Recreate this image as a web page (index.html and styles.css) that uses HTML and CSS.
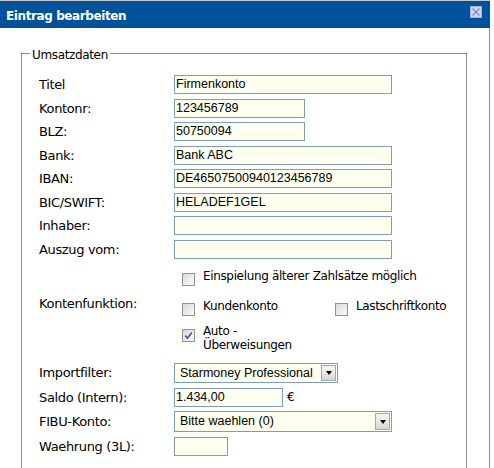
FILE: index.html
```html
<!DOCTYPE html>
<html lang="de">
<head>
<meta charset="utf-8">
<title>Eintrag bearbeiten</title>
<link rel="stylesheet" href="styles.css">
</head>
<body>
<div class="dlg">
  <div class="titlebar">
    <span class="title">Eintrag bearbeiten</span>
    <span class="close">
      <svg width="12" height="12" viewBox="0 0 12 12">
        <rect x="0.5" y="0.5" width="11" height="11" fill="#cdd5f1" stroke="#a6b3e4"/>
        <path d="M2.5 2.5 L9.5 9.5 M9.5 2.5 L2.5 9.5" stroke="#7d8dcf" stroke-width="1.4"/>
      </svg>
    </span>
  </div>
  <div class="content">
    <fieldset class="fs">
      <legend class="legend">Umsatzdaten</legend>
      <div class="inner">
        <div class="rows">
          <div class="row"><span class="lbl">Titel</span><span class="inp w-l">Firmenkonto</span></div>
          <div class="row"><span class="lbl">Kontonr:</span><span class="inp w-m">123456789</span></div>
          <div class="row"><span class="lbl">BLZ:</span><span class="inp w-m">50750094</span></div>
          <div class="row"><span class="lbl">Bank:</span><span class="inp w-l">Bank ABC</span></div>
          <div class="row"><span class="lbl">IBAN:</span><span class="inp w-l">DE46507500940123456789</span></div>
          <div class="row"><span class="lbl">BIC/SWIFT:</span><span class="inp w-l">HELADEF1GEL</span></div>
          <div class="row"><span class="lbl">Inhaber:</span><span class="inp w-l"></span></div>
          <div class="row"><span class="lbl">Auszug vom:</span><span class="inp w-l"></span></div>
        </div>

        <div class="crow crow-1">
          <span class="lbl"></span>
          <span class="chk-item"><span class="chk"></span><span class="ctext">Einspielung älterer Zahlsätze möglich</span></span>
        </div>
        <div class="crow crow-2">
          <span class="lbl lbl-up">Kontenfunktion:</span>
          <span class="chk-item first"><span class="chk"></span><span class="ctext">Kundenkonto</span></span>
          <span class="chk-item"><span class="chk"></span><span class="ctext">Lastschriftkonto</span></span>
        </div>
        <div class="crow crow-3">
          <span class="lbl"></span>
          <span class="chk-item"><span class="chk checked"><svg width="11" height="11" viewBox="0 0 11 11"><path d="M2.2 5.6 L4.4 8.3 L8.8 2.4" fill="none" stroke="#3d54a0" stroke-width="1.6"/></svg></span><span class="ctext">Auto -<br>Überweisungen</span></span>
        </div>

        <div class="row row-sel1"><span class="lbl">Importfilter:</span><span class="sel w-s1"><span class="seltext">Starmoney Professional</span><span class="selbtn"><span class="tri"></span></span></span></div>
        <div class="row row-saldo"><span class="lbl">Saldo (Intern):</span><span class="inp w-saldo">1.434,00</span><span class="euro">€</span></div>
        <div class="row row-sel2"><span class="lbl">FIBU-Konto:</span><span class="sel w-l sel-tall"><span class="seltext">Bitte waehlen (0)</span><span class="selbtn"><span class="tri"></span></span></span></div>
        <div class="row row-wae"><span class="lbl">Waehrung (3L):</span><span class="inp w-xs"></span></div>
      </div>
    </fieldset>
  </div>
</div>
</body>
</html>
```

FILE: styles.css
```css
html, body {
  margin: 0;
  padding: 0;
  background: #ffffff;
}

body {
  font-family: "DejaVu Sans", Verdana, sans-serif;
  color: #000;
  overflow: hidden;
}

.dlg {
  width: 490px;
  height: 468px;
  border-top: 1px solid #c6c6c6;
  box-sizing: border-box;
}

.titlebar {
  height: 27px;
  background: #01519b;
  display: flex;
  align-items: flex-start;
  justify-content: space-between;
  padding: 0 8px 0 6px;
}

.title {
  color: #fff;
  font-weight: bold;
  font-size: 12px;
  letter-spacing: -0.4px;
  line-height: 14px;
  margin-top: 7.5px;
}

.close {
  display: block;
  width: 12px;
  height: 12px;
  margin-top: 5px;
}

.close svg {
  display: block;
}

.content {
  border-right: 1px solid #8c8c8c;
  height: 440px;
  padding: 17px 0 0 21px;
  box-sizing: border-box;
  overflow: hidden;
}

.fs {
  width: 446px;
  box-sizing: border-box;
  margin: 0;
  padding: 0 0 30px 0;
  border: 1px solid #8c8c8c;
  min-inline-size: 0;
}

.legend {
  margin-left: 8px;
  padding: 3px 2px 0 2px;
  font-size: 12px;
  letter-spacing: -0.35px;
  line-height: 14px;
}

.inner {
  padding: 13px 0 0 17px;
}

.rows {
  display: flex;
  flex-direction: column;
  gap: 4.57px;
}

.row {
  display: flex;
  align-items: center;
  height: 19px;
}

.lbl {
  width: 135px;
  flex: none;
  font-size: 13px;
  letter-spacing: -0.35px;
  line-height: 15px;
}

.inp {
  display: block;
  box-sizing: border-box;
  height: 19px;
  border: 1px solid #7f9db9;
  background: #fffff0;
  font-family: "Liberation Sans", Arial, sans-serif;
  font-size: 12.5px;
  line-height: 17px;
  padding-left: 1px;
  white-space: nowrap;
  overflow: hidden;
}

.w-l { width: 218px; }
.w-m { width: 131px; }
.w-saldo { width: 109px; }
.w-xs { width: 54px; }
.w-s1 { width: 164px; }

.crow {
  display: flex;
  align-items: flex-start;
}

.crow-1 { margin-top: 11.5px; }
.crow-2 { margin-top: 14px; }
.crow-3 { margin-top: 9px; }

.lbl-up {
  margin-top: -3.7px;
}

.chk-item {
  display: flex;
  align-items: flex-start;
  margin-left: 8px;
}

.chk-item.first {
  width: 153px;
}

.chk-item.first + .chk-item {
  margin-left: 0;
}

.chk {
  display: block;
  width: 13px;
  height: 13px;
  box-sizing: border-box;
  border: 1px solid #929292;
  background: linear-gradient(135deg, #d8d8d8 0%, #eeeeee 60%, #fafafa 100%);
  margin-top: 2.7px;
  margin-right: 8px;
  flex: none;
}

.crow-2 .chk,
.crow-3 .chk {
  margin-top: 3.2px;
}

.chk svg {
  display: block;
}

.ctext {
  font-size: 12px;
  letter-spacing: -0.35px;
  line-height: 13.3px;
}

.row-sel1 {
  margin-top: 10.8px;
  height: 20px;
}

.row-saldo {
  margin-top: 5px;
}

.row-sel2 {
  margin-top: 4px;
  height: 21px;
}

.row-wae {
  margin-top: 5px;
}

.sel {
  display: flex;
  align-items: center;
  justify-content: space-between;
  box-sizing: border-box;
  height: 20px;
  border: 1px solid #7f9db9;
  background: #fffff0;
  padding-left: 5px;
  font-family: "Liberation Sans", Arial, sans-serif;
  font-size: 12.5px;
}

.sel-tall {
  height: 21px;
}

.seltext {
  white-space: nowrap;
}

.selbtn {
  display: flex;
  align-items: center;
  justify-content: center;
  width: 15px;
  height: 16px;
  box-sizing: border-box;
  margin-right: 1px;
  border: 1px solid #a7a7a7;
  background: linear-gradient(180deg, #f6f6f6 0%, #e6e6e6 55%, #d6d6d6 100%);
}

.sel-tall .selbtn {
  height: 17px;
}

.tri {
  width: 0;
  height: 0;
  border-left: 3.5px solid transparent;
  border-right: 3.5px solid transparent;
  border-top: 4px solid #000;
  margin-top: 1px;
}

.euro {
  margin-left: 4px;
  font-size: 12px;
  line-height: 15px;
}
```
